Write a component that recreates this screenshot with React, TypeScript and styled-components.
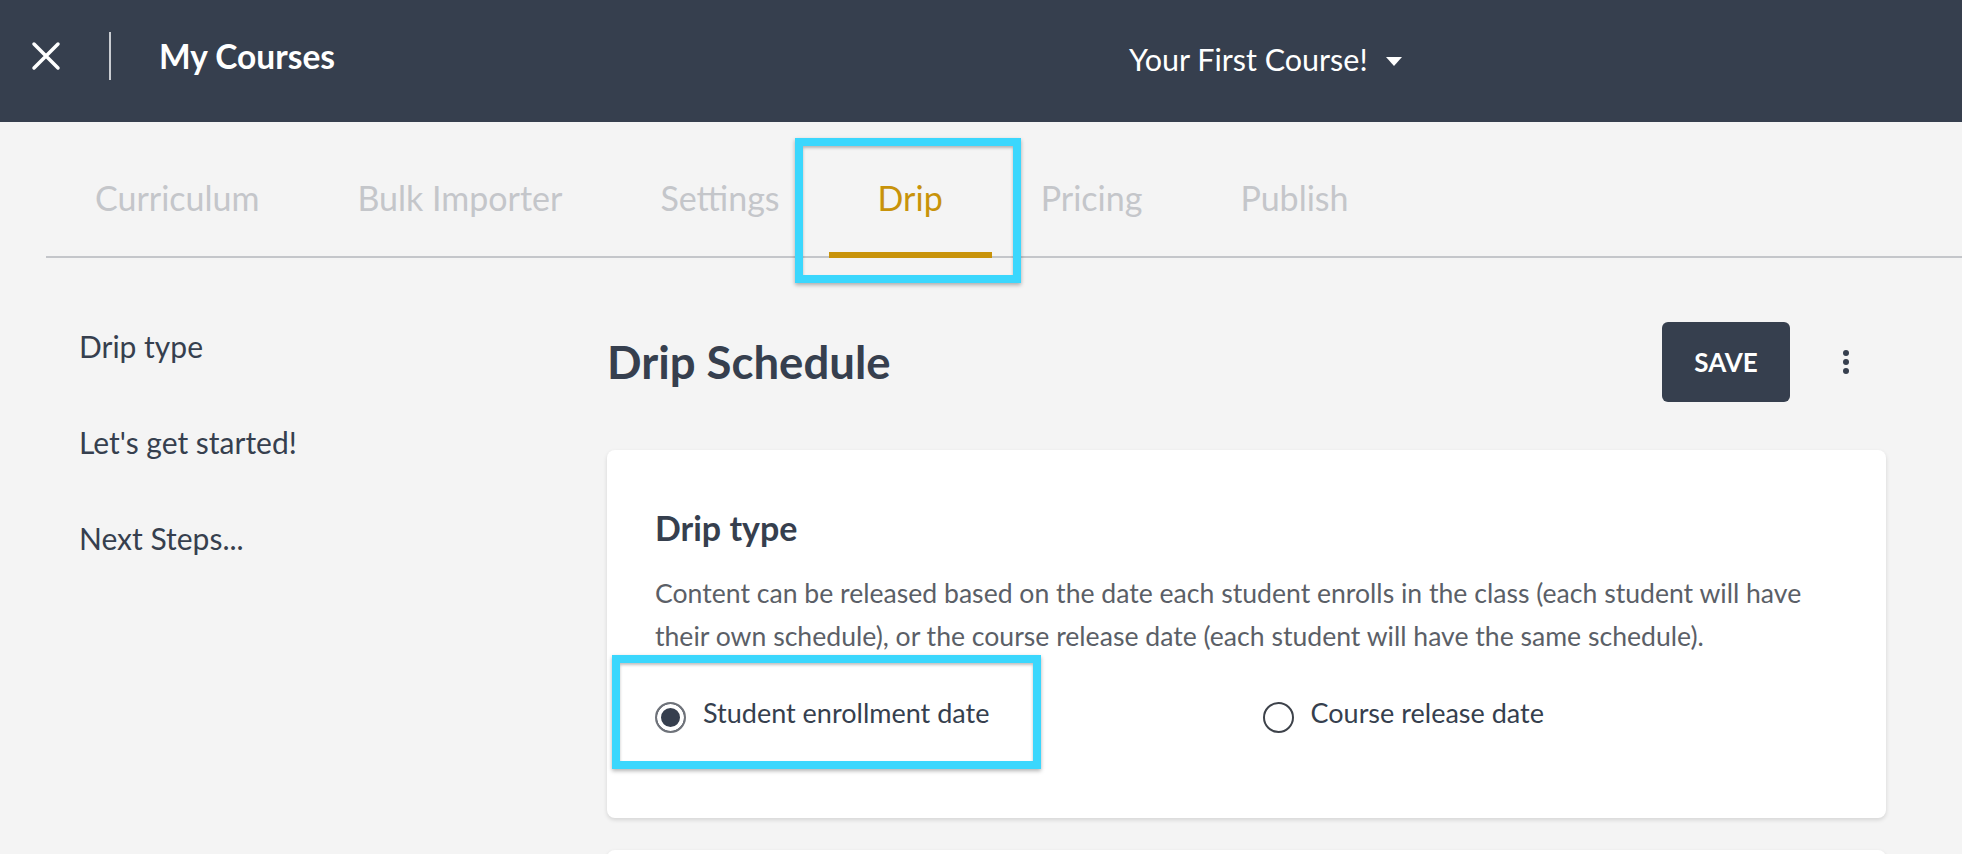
import React from "react";
import styled, { createGlobalStyle } from "styled-components";

const GlobalStyle = createGlobalStyle`
  html, body { margin: 0; padding: 0; background: #f4f4f4; }
  body { font-family: "Lato", "Noto Sans", sans-serif; color: #363f4e; overflow: hidden; }
  * { box-sizing: border-box; }
`;

const Page = styled.div`
  width: 1962px;
  height: 854px;
  overflow: hidden;
  background: #f4f4f4;
`;

const TopBar = styled.header`
  height: 122px;
  background: #363f4e;
  display: grid;
  grid-template-columns: 1098px auto;
  align-items: center;
  padding: 0 0 10px 31px;
`;

const LeftGroup = styled.div`
  display: flex;
  align-items: center;
`;

const CloseButton = styled.button`
  width: 30px;
  height: 30px;
  padding: 0;
  border: 0;
  background: none;
  display: flex;
  cursor: pointer;
`;

const Divider = styled.span`
  width: 2px;
  height: 48px;
  background: #c9ccd1;
  margin-left: 48px;
`;

const BrandTitle = styled.span`
  margin-left: 48px;
  font-size: 33.5px;
  font-weight: 700;
  color: #ffffff;
  line-height: 1.2;
`;

const CourseSelect = styled.div`
  display: flex;
  align-items: center;
  color: #ffffff;
  font-size: 30.5px;
  line-height: 1.2;
  margin-top: 6px;
`;

const Caret = styled.span`
  width: 0;
  height: 0;
  margin-left: 18px;
  margin-top: 4px;
  border-left: 8px solid transparent;
  border-right: 8px solid transparent;
  border-top: 9px solid #ffffff;
`;

const TabNav = styled.nav`
  display: flex;
  height: 136px;
  margin-left: 46px;
  border-bottom: 2px solid #c4c6ca;
`;

const Tab = styled.div<{ $active?: boolean }>`
  position: relative;
  padding: 56px 49px 0;
  font-size: 34px;
  line-height: 1.2;
  color: ${(p) => (p.$active ? "#c8930a" : "#c4c6ca")};
  ${(p) =>
    p.$active &&
    `
    &::after {
      content: "";
      position: absolute;
      left: 0;
      right: 0;
      bottom: -2px;
      height: 6px;
      background: #c8930a;
    }
  `}
`;

const Highlight = styled.span<{ $t: number; $r: number; $b: number; $l: number }>`
  position: absolute;
  top: ${(p) => p.$t}px;
  right: ${(p) => p.$r}px;
  bottom: ${(p) => p.$b}px;
  left: ${(p) => p.$l}px;
  border: 8px solid #3bd7fd;
  box-shadow: 0 2px 4px rgba(0, 0, 0, 0.3), inset 0 2px 3px rgba(0, 0, 0, 0.25);
  pointer-events: none;
  z-index: 2;
`;

const Body = styled.div`
  display: grid;
  grid-template-columns: 528px 1279px;
  padding: 0 76px 0 79px;
`;

const SideNav = styled.ul`
  list-style: none;
  margin: 0;
  padding: 70px 0 0;
`;

const SideItem = styled.li`
  font-size: 30px;
  line-height: 36px;
  margin-bottom: 60px;
  color: #363f4e;
`;

const Main = styled.main`
  padding-top: 64px;
`;

const MainHeader = styled.div`
  display: flex;
  align-items: center;
  height: 80px;
`;

const PageTitle = styled.h1`
  margin: 0 auto 0 0;
  font-size: 45.5px;
  font-weight: 700;
  line-height: 1.2;
  color: #363f4e;
`;

const SaveButton = styled.button`
  width: 128px;
  height: 80px;
  border: 0;
  border-radius: 6px;
  background: #363f4e;
  color: #ffffff;
  font-family: "Lato", sans-serif;
  font-weight: 700;
  font-size: 26px;
  cursor: pointer;
`;

const MoreButton = styled.button`
  width: 6px;
  height: 30px;
  padding: 0;
  margin: 0 37px 0 53px;
  border: 0;
  background: none;
  display: flex;
`;

const Card = styled.section<{ $muted?: boolean }>`
  background: #ffffff;
  border-radius: 8px;
  box-shadow: 0 2px 4px rgba(0, 0, 0, 0.13);
  padding: 58px 48px 85px;
  margin-top: ${(p) => (p.$muted ? "32px" : "48px")};
  min-height: ${(p) => (p.$muted ? "200px" : "auto")};
`;

const CardTitle = styled.h2`
  margin: 0;
  font-size: 34px;
  font-weight: 700;
  line-height: 1.2;
  color: #363f4e;
`;

const CardText = styled.p`
  margin: 23px 0 0;
  font-size: 26.6px;
  line-height: 43px;
  color: #5b5f67;
`;

const RadioGroup = styled.div`
  display: grid;
  grid-template-columns: 1fr 1fr;
  column-gap: 32px;
  margin-top: 39px;
`;

const RadioOption = styled.label`
  position: relative;
  display: flex;
  align-items: flex-start;
  justify-self: start;
  gap: 17px;
  font-size: 27px;
  line-height: 1.2;
  color: #363f4e;
  cursor: pointer;
`;

const RadioCircle = styled.span<{ $checked?: boolean }>`
  width: 31px;
  height: 31px;
  margin-top: 5px;
  border-radius: 50%;
  flex: none;
  background: ${(p) => (p.$checked ? "#363f4e" : "#ffffff")};
  border: 2px solid ${(p) => (p.$checked ? "#6f737a" : "#3d424a")};
  box-shadow: ${(p) => (p.$checked ? "inset 0 0 0 4px #ffffff" : "none")};
`;

export default function App() {
  const tabs = ["Curriculum", "Bulk Importer", "Settings", "Drip", "Pricing", "Publish"];
  return (
    <Page>
      <GlobalStyle />
      <TopBar>
        <LeftGroup>
          <CloseButton aria-label="Close">
            <svg width="30" height="30" viewBox="0 0 30 30">
              <path d="M3 3 L27 27 M27 3 L3 27" stroke="#ffffff" strokeWidth="3.5" strokeLinecap="round" />
            </svg>
          </CloseButton>
          <Divider />
          <BrandTitle>My Courses</BrandTitle>
        </LeftGroup>
        <CourseSelect>
          Your First Course!
          <Caret />
        </CourseSelect>
      </TopBar>

      <TabNav>
        {tabs.map((t) => (
          <Tab key={t} $active={t === "Drip"}>
            {t}
            {t === "Drip" && <Highlight $t={16} $r={-29} $b={-27} $l={-34} />}
          </Tab>
        ))}
      </TabNav>

      <Body>
        <SideNav>
          <SideItem>Drip type</SideItem>
          <SideItem>Let's get started!</SideItem>
          <SideItem>Next Steps...</SideItem>
        </SideNav>
        <Main>
          <MainHeader>
            <PageTitle>Drip Schedule</PageTitle>
            <SaveButton>SAVE</SaveButton>
            <MoreButton aria-label="More">
              <svg width="6" height="30" viewBox="0 0 6 30">
                <circle cx="3" cy="6" r="3" fill="#363f4e" />
                <circle cx="3" cy="15" r="3" fill="#363f4e" />
                <circle cx="3" cy="24" r="3" fill="#363f4e" />
              </svg>
            </MoreButton>
          </MainHeader>

          <Card>
            <CardTitle>Drip type</CardTitle>
            <CardText>
              Content can be released based on the date each student enrolls in the class (each student will have
              their own schedule), or the course release date (each student will have the same schedule).
            </CardText>
            <RadioGroup>
              <RadioOption>
                <RadioCircle $checked />
                Student enrollment date
                <Highlight $t={-42} $r={-52} $b={-36} $l={-43} />
              </RadioOption>
              <RadioOption>
                <RadioCircle />
                Course release date
              </RadioOption>
            </RadioGroup>
          </Card>
          <Card $muted />
        </Main>
      </Body>
    </Page>
  );
}
